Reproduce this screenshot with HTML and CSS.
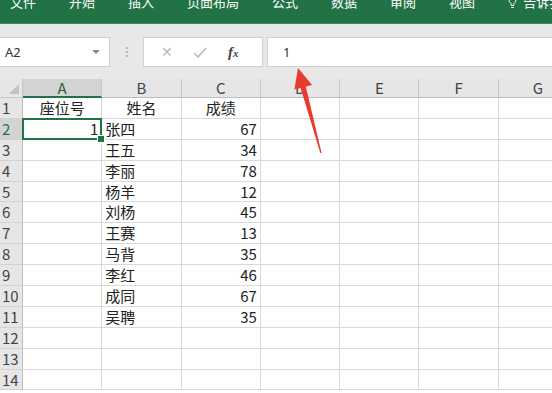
FILE: index.html
```html
<!DOCTYPE html>
<html lang="zh-CN">
<head>
<meta charset="utf-8">
<title>Excel</title>
<link rel="stylesheet" href="styles.css">
</head>
<body>
<div class="app">
  <div class="ribbon">
    <div class="tabs">
      <span class="tab">文件</span>
      <span class="tab">开始</span>
      <span class="tab">插入</span>
      <span class="tab">页面布局</span>
      <span class="tab">公式</span>
      <span class="tab">数据</span>
      <span class="tab">审阅</span>
      <span class="tab">视图</span>
      <span class="tab tell">
        <svg class="bulb" width="9" height="13" viewBox="0 0 9 13"><path d="M4.5 1a3.3 3.3 0 0 0-2 6c.5.4.7.9.7 1.5v1h2.6v-1c0-.6.2-1.1.7-1.5a3.3 3.3 0 0 0-2-6z" fill="none" stroke="#fff" stroke-width="1"/><path d="M3.2 11.5h2.6" stroke="#fff" stroke-width="1"/></svg>
        <span>告诉我</span>
      </span>
    </div>
  </div>

  <div class="fbar">
    <div class="namebox">
      <span class="ref">A2</span>
      <span class="caret"></span>
    </div>
    <div class="dots"><i></i><i></i><i></i></div>
    <div class="fxbox">
      <span class="ic x">✕</span>
      <svg class="ic check" width="14" height="11" viewBox="0 0 14 11"><path d="M1 6l4 4 8-9" fill="none" stroke="#b9b9b9" stroke-width="1.6"/></svg>
      <span class="ic fx"><i>f</i><i class="sub">x</i></span>
    </div>
    <div class="formula">1</div>
  </div>

  <div class="sheet">
    <div class="corner"><span class="tri"></span></div>
    <div class="ch sel">A</div>
    <div class="ch">B</div>
    <div class="ch">C</div>
    <div class="ch">D</div>
    <div class="ch">E</div>
    <div class="ch">F</div>
    <div class="ch">G</div>

    <div class="rh">1</div><div class="c ctr">座位号</div><div class="c ctr">姓名</div><div class="c ctr">成绩</div><div class="c"></div><div class="c"></div><div class="c"></div><div class="c"></div>
    <div class="rh rsel">2</div><div class="c num active">1</div><div class="c">张四</div><div class="c num">67</div><div class="c"></div><div class="c"></div><div class="c"></div><div class="c"></div>
    <div class="rh">3</div><div class="c"></div><div class="c">王五</div><div class="c num">34</div><div class="c"></div><div class="c"></div><div class="c"></div><div class="c"></div>
    <div class="rh">4</div><div class="c"></div><div class="c">李丽</div><div class="c num">78</div><div class="c"></div><div class="c"></div><div class="c"></div><div class="c"></div>
    <div class="rh">5</div><div class="c"></div><div class="c">杨羊</div><div class="c num">12</div><div class="c"></div><div class="c"></div><div class="c"></div><div class="c"></div>
    <div class="rh">6</div><div class="c"></div><div class="c">刘杨</div><div class="c num">45</div><div class="c"></div><div class="c"></div><div class="c"></div><div class="c"></div>
    <div class="rh">7</div><div class="c"></div><div class="c">王赛</div><div class="c num">13</div><div class="c"></div><div class="c"></div><div class="c"></div><div class="c"></div>
    <div class="rh">8</div><div class="c"></div><div class="c">马背</div><div class="c num">35</div><div class="c"></div><div class="c"></div><div class="c"></div><div class="c"></div>
    <div class="rh">9</div><div class="c"></div><div class="c">李红</div><div class="c num">46</div><div class="c"></div><div class="c"></div><div class="c"></div><div class="c"></div>
    <div class="rh">10</div><div class="c"></div><div class="c">成同</div><div class="c num">67</div><div class="c"></div><div class="c"></div><div class="c"></div><div class="c"></div>
    <div class="rh">11</div><div class="c"></div><div class="c">吴聘</div><div class="c num">35</div><div class="c"></div><div class="c"></div><div class="c"></div><div class="c"></div>
    <div class="rh">12</div><div class="c"></div><div class="c"></div><div class="c"></div><div class="c"></div><div class="c"></div><div class="c"></div><div class="c"></div>
    <div class="rh">13</div><div class="c"></div><div class="c"></div><div class="c"></div><div class="c"></div><div class="c"></div><div class="c"></div><div class="c"></div>
    <div class="rh">14</div><div class="c"></div><div class="c"></div><div class="c"></div><div class="c"></div><div class="c"></div><div class="c"></div><div class="c"></div>
  </div>

  <svg class="arrow" width="552" height="393" viewBox="0 0 552 393">
    <polygon points="298,68 312,85 305.8,86.6 321.6,153 320.4,153.3 300.6,88 294.4,89.6" fill="#ea3a2f"/>
  </svg>
</div>
</body>
</html>
```

FILE: styles.css
```css
* { box-sizing: border-box; }
html, body { margin: 0; padding: 0; }
body {
  width: 552px;
  height: 393px;
  overflow: hidden;
  background: #fff;
  font-family: "Noto Sans CJK SC", "Noto Sans", sans-serif;
  color: #333;
}
.app { position: relative; width: 552px; height: 393px; overflow: hidden; }

.ribbon {
  height: 24px;
  background: #217346;
  border-bottom: 1px solid #3b8a5e;
  overflow: hidden;
}
.tabs {
  display: flex;
  gap: 33px;
  padding-left: 10px;
  margin-top: -5px;
  font-size: 13px;
  line-height: 13px;
  color: #fff;
  white-space: nowrap;
}
.tell { display: flex; align-items: flex-end; gap: 6px; }
.bulb { margin-bottom: -1px; }

.fbar {
  height: 55px;
  background: #e8e8e8;
  display: flex;
  align-items: flex-start;
  padding-top: 13px;
}
.namebox {
  width: 110px;
  height: 30px;
  background: #fff;
  border: 1px solid #d0d0d0;
  border-left: none;
  display: flex;
  align-items: center;
  justify-content: space-between;
  padding: 0 9px 0 5px;
}
.ref { font-size: 13px; color: #333; font-family: "Noto Sans", sans-serif; }
.caret {
  width: 0; height: 0;
  border-left: 4px solid transparent;
  border-right: 4px solid transparent;
  border-top: 4px solid #8a8a8a;
}
.dots {
  width: 33px;
  height: 30px;
  display: flex;
  flex-direction: column;
  align-items: center;
  justify-content: center;
  gap: 2px;
}
.dots i { width: 2px; height: 2px; background: #b8b8b8; display: block; }
.fxbox {
  width: 120px;
  height: 30px;
  background: #fff;
  border: 1px solid #d0d0d0;
  display: flex;
  align-items: center;
  padding-left: 17px;
}
.ic { display: block; }
.x { font-size: 14px; color: #b9b9b9; font-family: "DejaVu Sans", sans-serif; width: 30px; }
.check { margin-left: 2px; width: 14px; }
.fx {
  margin-left: 21px;
  font-family: "Liberation Serif", serif;
  font-size: 15px;
  color: #444;
  font-weight: bold;
}
.fx i { font-style: italic; }
.fx .sub { font-size: 11px; }
.formula {
  margin-left: 4px;
  flex: 1;
  height: 30px;
  background: #fff;
  border: 1px solid #d0d0d0;
  border-right: none;
  padding-left: 15px;
  font-size: 13px;
  line-height: 28px;
  font-family: "Noto Sans", sans-serif;
  color: #333;
}

.sheet {
  display: grid;
  grid-template-columns: 23px repeat(7, 79.3px);
  grid-template-rows: 19px repeat(14, 20.9px);
  font-size: 15px;
  color: #222;
}
.corner {
  background: #e6e6e6;
  border-right: 1px solid #c8c8c8;
  border-bottom: 1px solid #c8c8c8;
  position: relative;
}
.tri {
  position: absolute;
  right: 3px;
  bottom: 3px;
  width: 0; height: 0;
  border-left: 10px solid transparent;
  border-bottom: 10px solid #c3c3c3;
}
.ch {
  background: #e6e6e6;
  border-right: 1px solid #c8c8c8;
  border-bottom: 1px solid #bdbdbd;
  text-align: center;
  font-size: 15px;
  line-height: 18px;
  color: #444;
}
.ch.sel {
  background: #d3d3d3;
  border-bottom: 2px solid #217346;
  color: #2c5e3f;
}
.rh {
  background: #e6e6e6;
  border-right: 1px solid #bdbdbd;
  border-bottom: 1px solid #d2d2d2;
  font-size: 15px;
  line-height: 20px;
  padding-left: 2px;
  color: #444;
}
.rh.rsel { background: #d3d3d3; color: #217346; }
.c {
  border-right: 1px solid #d9d9d9;
  border-bottom: 1px solid #d9d9d9;
  line-height: 20px;
  padding: 0 3px;
  white-space: nowrap;
  overflow: visible;
}
.ctr { text-align: center; }
.num { text-align: right; }
.active { position: relative; }
.active::before {
  content: "";
  position: absolute;
  left: -1px;
  top: -1px;
  right: -1px;
  bottom: -1px;
  border: 2px solid #217346;
}
.active::after {
  content: "";
  position: absolute;
  right: -4px;
  bottom: -4px;
  width: 6px;
  height: 6px;
  background: #217346;
  border: 1px solid #fff;
}
.arrow { position: absolute; left: 0; top: 0; pointer-events: none; }
```
